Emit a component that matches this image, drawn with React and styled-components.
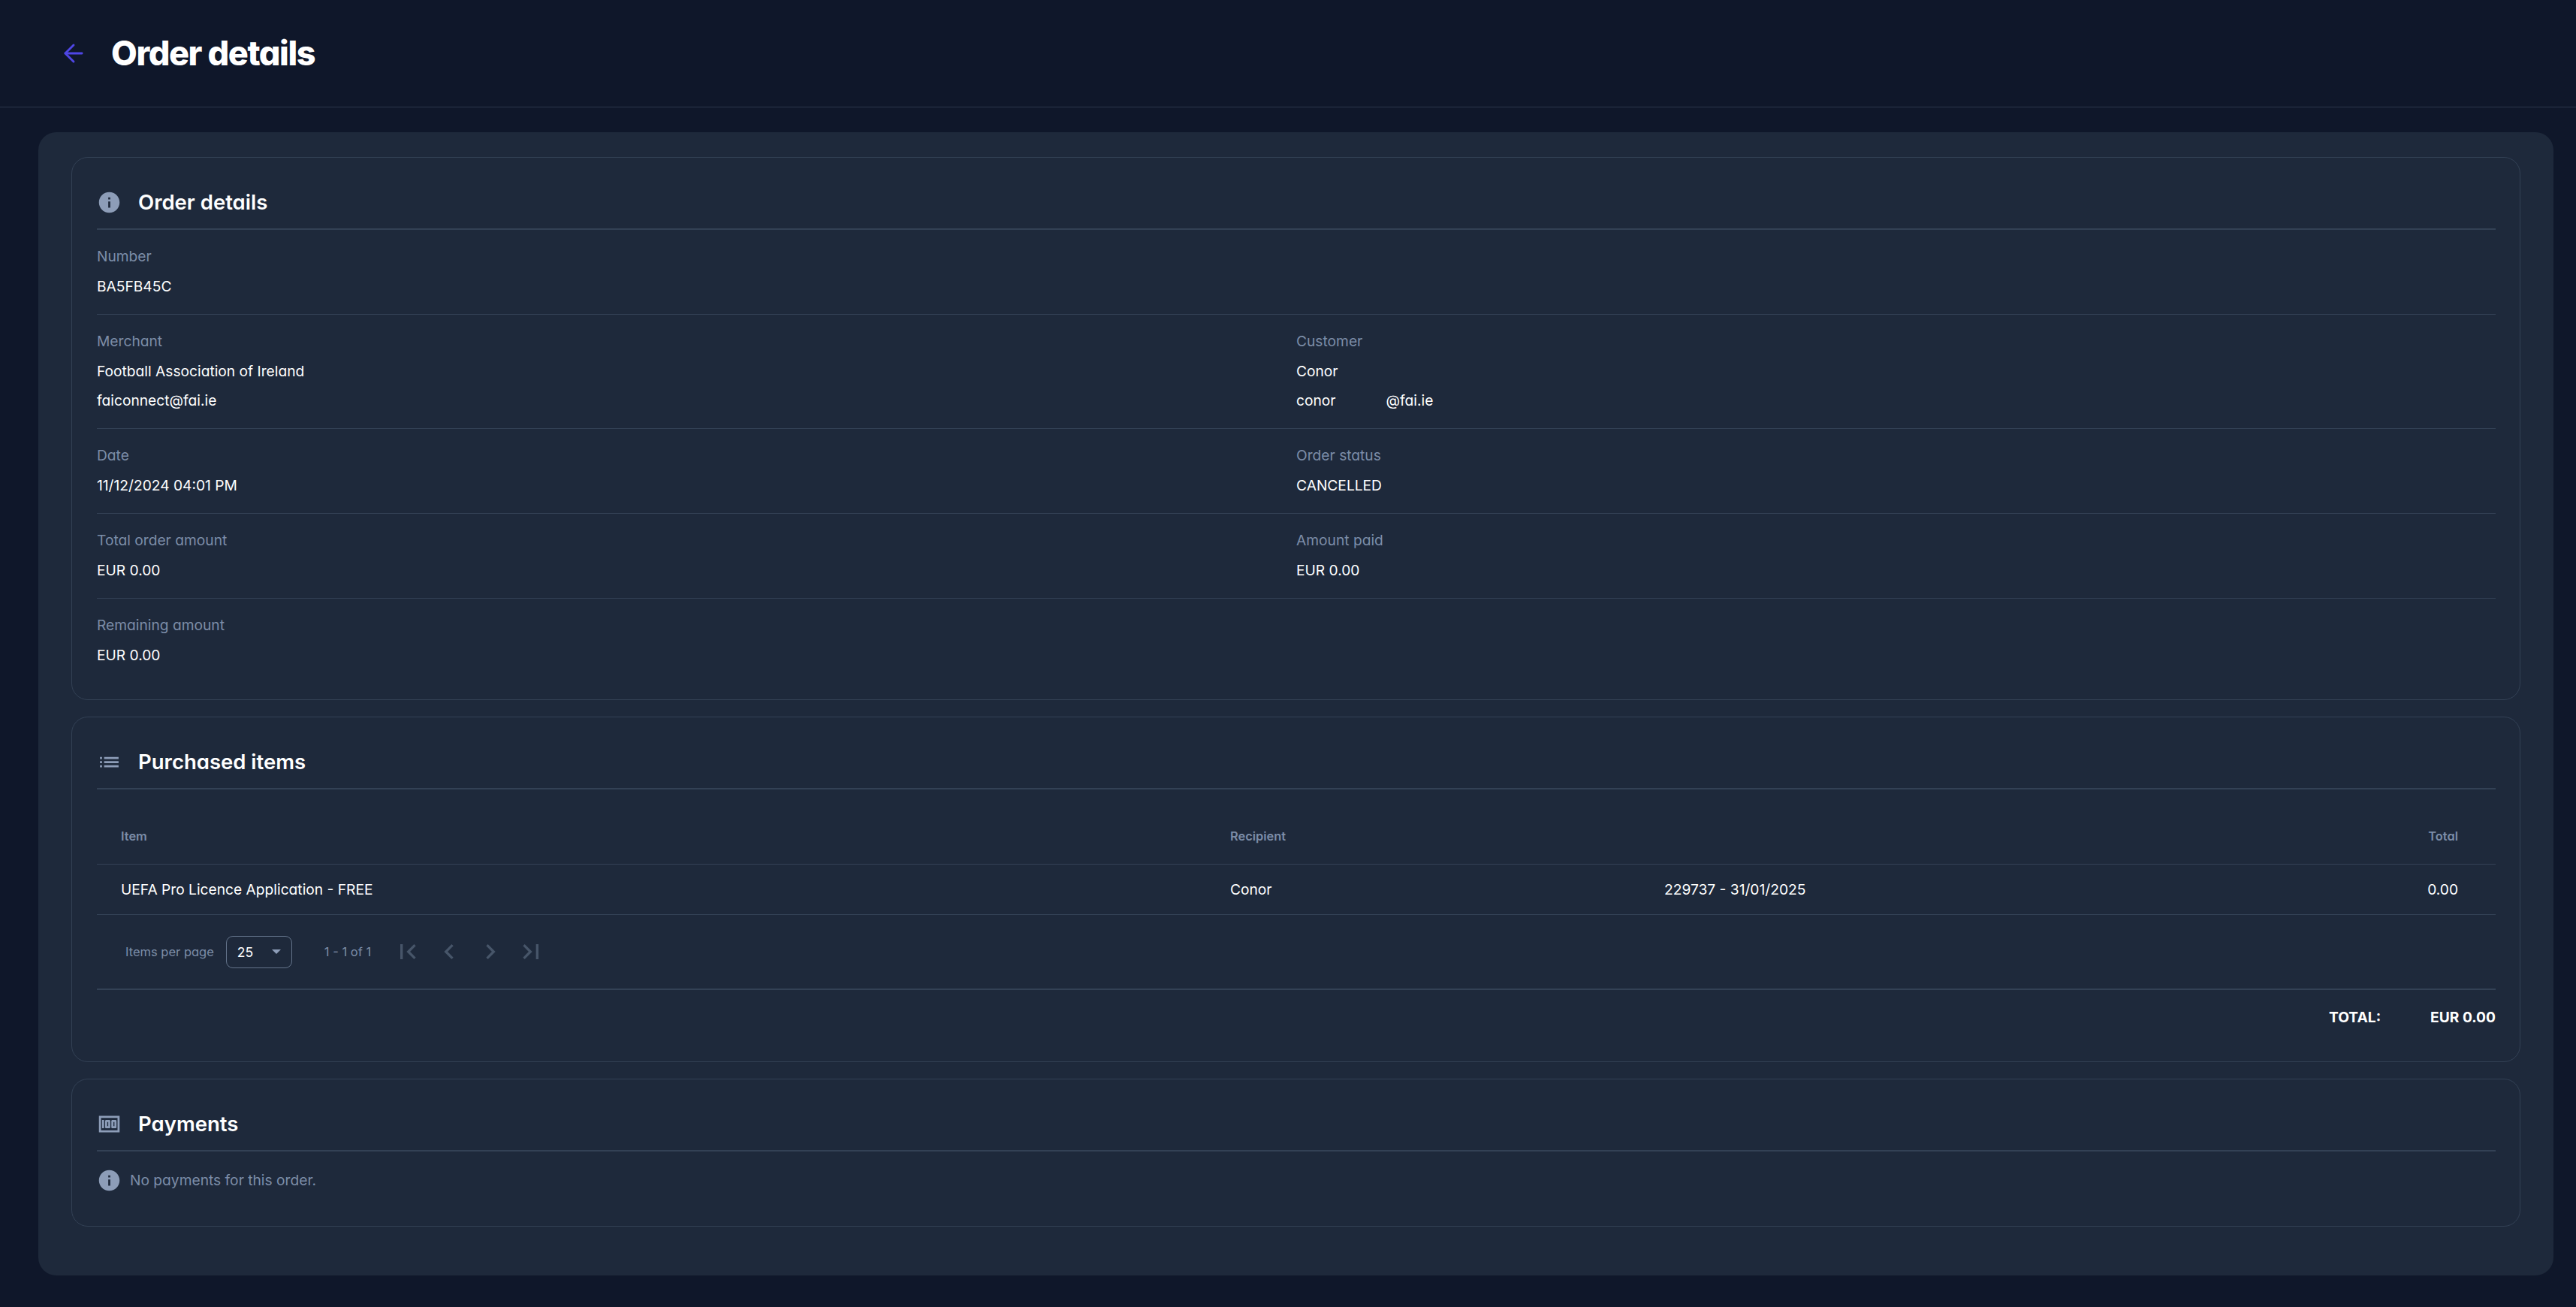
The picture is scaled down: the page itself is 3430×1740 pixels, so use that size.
import React from 'react';
import styled, { createGlobalStyle } from 'styled-components';
import { ArrowLeft } from 'lucide-react';
import { MdInfo, MdList, MdMoney, MdFirstPage, MdLastPage, MdChevronLeft, MdChevronRight } from 'react-icons/md';

const GlobalStyle = createGlobalStyle`
    html, body {
        margin: 0;
        padding: 0;
        background: #0f172a;
    }
    body {
        font-family: Inter, "Liberation Sans", sans-serif;
        font-feature-settings: "cv11";
        color: #ffffff;
    }
`;

const Page = styled.div`
    width: 3430px;
    height: 1740px;
    overflow: hidden;
    box-sizing: border-box;
`;

const Header = styled.header`
    display: flex;
    align-items: center;
    height: 143px;
    box-sizing: border-box;
    padding-left: 78px;
    border-bottom: 1px solid #2b374b;
`;

const BackButton = styled.button`
    display: flex;
    align-items: center;
    justify-content: center;
    width: 40px;
    height: 40px;
    padding: 0;
    margin-right: 30px;
    border: none;
    background: none;
    color: #4f46e5;
`;

const Title = styled.h1`
    margin: 0;
    font-size: 45px;
    font-weight: 800;
    letter-spacing: -1.4px;
    line-height: 60px;
`;

const Panel = styled.main`
    display: flex;
    flex-direction: column;
    gap: 22px;
    width: 3349px;
    box-sizing: border-box;
    margin: 33px 0 0 51px;
    padding: 33px 44px 65px;
    border-radius: 24px;
    background: #1e293b;
`;

const Card = styled.section`
    box-sizing: border-box;
    padding: 0 32px ${p => p.$bottom}px 33px;
    border: 1px solid #334155;
    border-radius: 22px;
`;

const CardHead = styled.div`
    display: flex;
    align-items: center;
    height: 96px;
    box-sizing: border-box;
    padding-top: 24px;
    border-bottom: 2px solid #334155;
    color: #8d9db8;
`;

const HeadIcon = styled.span`
    display: flex;
    align-items: center;
    justify-content: center;
    width: 33px;
    height: 33px;
    margin-right: 22px;
`;

const CardTitle = styled.h2`
    margin: 0;
    font-size: 27.5px;
    font-weight: 600;
    color: #ffffff;
`;

const InfoRow = styled.div`
    display: grid;
    grid-template-columns: 1fr 1fr;
    padding: 16px 0 17px;
    border-bottom: ${p => (p.$last ? 'none' : '1px solid #334155')};
`;

const Label = styled.div`
    margin-bottom: 1px;
    font-size: 19.2px;
    line-height: 39px;
    color: #7c8da8;
`;

const Value = styled.div`
    font-size: 19.2px;
    line-height: 39px;
    color: #ffffff;
`;

const Hidden = styled.span`
    display: inline-block;
    width: 67px;
`;

const TableGrid = styled.div`
    display: grid;
    grid-template-columns: 1509px 578px 1fr 90px;
    align-items: center;
    height: ${p => p.$height}px;
    box-sizing: border-box;
    padding-right: 50px;
    padding-top: ${p => p.$top || 0}px;
    border-bottom: 1px solid #334155;
`;

const HeadCell = styled.div`
    padding-left: ${p => (p.$first ? 32 : 0)}px;
    font-size: 16.4px;
    font-weight: 600;
    color: #7c8da8;
    text-align: ${p => (p.$right ? 'right' : 'left')};
`;

const Cell = styled.div`
    padding-left: ${p => (p.$first ? 32 : 0)}px;
    font-size: 19.2px;
    color: #ffffff;
    text-align: ${p => (p.$right ? 'right' : 'left')};
`;

const Paginator = styled.div`
    display: flex;
    align-items: center;
    height: 100px;
    box-sizing: border-box;
    padding-left: 38px;
    border-bottom: 2px solid #334155;
    font-size: 16.5px;
    color: #7c8da8;
`;

const PerPage = styled.span`
    margin-right: 16px;
`;

const Select = styled.div`
    display: flex;
    align-items: center;
    justify-content: space-between;
    width: 88px;
    height: 43px;
    box-sizing: border-box;
    padding: 0 14px 0 14px;
    margin-right: 43px;
    border: 1px solid #64748b;
    border-radius: 9px;
    font-size: 17.5px;
    color: #ffffff;
`;

const Caret = styled.span`
    width: 0;
    height: 0;
    border-left: 6px solid transparent;
    border-right: 6px solid transparent;
    border-top: 6px solid #8d9db8;
`;

const Range = styled.span`
    margin-right: 22px;
`;

const PageButton = styled.span`
    display: flex;
    align-items: center;
    justify-content: center;
    width: 54.6px;
    height: 55px;
    color: #475569;
`;

const TotalRow = styled.div`
    display: flex;
    justify-content: flex-end;
    gap: 66px;
    padding-top: 23px;
    padding-bottom: 46px;
    font-size: 19.2px;
    line-height: 26px;
    font-weight: 700;
`;

const Notice = styled.div`
    display: flex;
    align-items: center;
    height: 78px;
    box-sizing: border-box;
    padding-bottom: 2px;
    color: #8d9db8;
`;

const NoticeIcon = styled.span`
    display: flex;
    align-items: center;
    justify-content: center;
    width: 33px;
    margin-right: 11px;
`;

const NoticeText = styled.span`
    font-size: 19.2px;
    color: #7c8da8;
`;

const details = [
    [{ label: 'Number', lines: ['BA5FB45C'] }],
    [
        { label: 'Merchant', lines: ['Football Association of Ireland', 'faiconnect@fai.ie'] },
        { label: 'Customer', lines: ['Conor', <>conor<Hidden />@fai.ie</>] },
    ],
    [
        { label: 'Date', lines: ['11/12/2024 04:01 PM'] },
        { label: 'Order status', lines: ['CANCELLED'] },
    ],
    [
        { label: 'Total order amount', lines: ['EUR 0.00'] },
        { label: 'Amount paid', lines: ['EUR 0.00'] },
    ],
    [{ label: 'Remaining amount', lines: ['EUR 0.00'] }],
];

function App() {
    return (
        <Page>
            <GlobalStyle />
            <Header>
                <BackButton><ArrowLeft size={38} strokeWidth={1.8} /></BackButton>
                <Title>Order details</Title>
            </Header>
            <Panel>
                <Card $bottom={22}>
                    <CardHead>
                        <HeadIcon><MdInfo size={33} /></HeadIcon>
                        <CardTitle>Order details</CardTitle>
                    </CardHead>
                    {details.map((row, i) => (
                        <InfoRow key={i} $last={i === details.length - 1}>
                            {row.map(item => (
                                <div key={item.label}>
                                    <Label>{item.label}</Label>
                                    {item.lines.map((line, j) => <Value key={j}>{line}</Value>)}
                                </div>
                            ))}
                        </InfoRow>
                    ))}
                </Card>
                <Card $bottom={0}>
                    <CardHead>
                        <HeadIcon><MdList size={33} /></HeadIcon>
                        <CardTitle>Purchased items</CardTitle>
                    </CardHead>
                    <TableGrid $height={100} $top={24}>
                        <HeadCell $first>Item</HeadCell>
                        <HeadCell>Recipient</HeadCell>
                        <HeadCell />
                        <HeadCell $right>Total</HeadCell>
                    </TableGrid>
                    <TableGrid $height={67}>
                        <Cell $first>UEFA Pro Licence Application - FREE</Cell>
                        <Cell>Conor</Cell>
                        <Cell>229737 - 31/01/2025</Cell>
                        <Cell $right>0.00</Cell>
                    </TableGrid>
                    <Paginator>
                        <PerPage>Items per page</PerPage>
                        <Select>25<Caret /></Select>
                        <Range>1 - 1 of 1</Range>
                        <PageButton><MdFirstPage size={40} /></PageButton>
                        <PageButton><MdChevronLeft size={40} /></PageButton>
                        <PageButton><MdChevronRight size={40} /></PageButton>
                        <PageButton><MdLastPage size={40} /></PageButton>
                    </Paginator>
                    <TotalRow>
                        <span>TOTAL:</span>
                        <span>EUR 0.00</span>
                    </TotalRow>
                </Card>
                <Card $bottom={21}>
                    <CardHead>
                        <HeadIcon><MdMoney size={33} /></HeadIcon>
                        <CardTitle>Payments</CardTitle>
                    </CardHead>
                    <Notice>
                        <NoticeIcon><MdInfo size={33} /></NoticeIcon>
                        <NoticeText>No payments for this order.</NoticeText>
                    </Notice>
                </Card>
            </Panel>
        </Page>
    );
}

export default App;
